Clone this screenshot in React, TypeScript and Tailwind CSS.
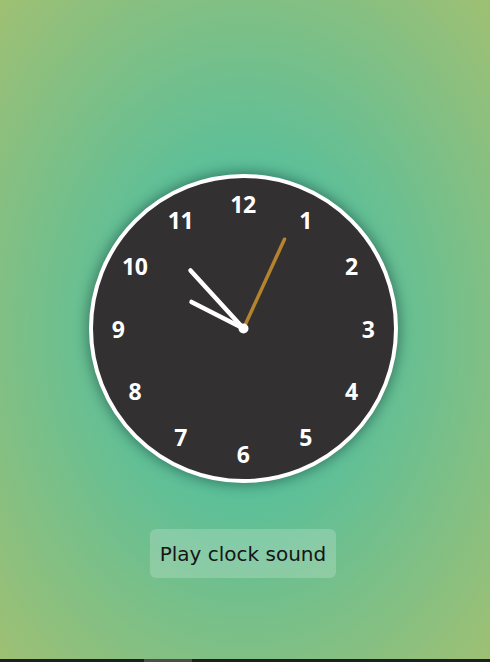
import React from "react";

const nums = [12, 1, 2, 3, 4, 5, 6, 7, 8, 9, 10, 11];

export default function App() {
  return (
    <div className="w-full min-h-[662px] flex flex-col bg-[radial-gradient(ellipse_farthest-corner_at_50%_50%,#4bbfa2_0%,#5cbf99_35%,#9fc073_100%)]">
      <div className="flex-1 flex flex-col items-center pt-[174px] pr-[4px] h-[659px]">
        <div className="relative w-[309px] h-[309px] rounded-full border-4 border-white bg-[#323031] shadow-[0_0_12px_3px_rgba(20,60,50,0.45)] shrink-0">
          {nums.map((n, i) => {
            const a = (i * 30 * Math.PI) / 180;
            const x = 150.5 + 125 * Math.sin(a);
            const y = 150.5 - 125 * Math.cos(a);
            return (
              <div
                key={n}
                className="absolute -translate-x-1/2 -translate-y-1/2 text-white text-[23px] font-bold leading-none tracking-[-0.5px] font-['Open_Sans','Noto_Sans',sans-serif]"
                style={{ left: x, top: y }}
              >
                {n}
              </div>
            );
          })}
          <svg className="absolute inset-0 w-full h-full" viewBox="-150.5 -150.5 301 301">
            <line x1="0" y1="0" x2="-52" y2="-26.6" stroke="#ffffff" strokeWidth="4.5" strokeLinecap="round" />
            <line x1="0" y1="0" x2="-53" y2="-58" stroke="#ffffff" strokeWidth="4.5" strokeLinecap="round" />
            <line x1="0" y1="0" x2="41" y2="-89.3" stroke="#b5832e" strokeWidth="3.5" strokeLinecap="round" />
            <circle cx="0" cy="0" r="5" fill="#ffffff" />
          </svg>
        </div>
        <button className="mt-[46px] w-[186px] h-[49px] rounded-md bg-[rgba(255,255,255,0.2)] text-[#151515] text-[20px] font-['DejaVu_Sans',sans-serif] flex items-center justify-center">
          Play clock sound
        </button>
      </div>
      <div className="h-[3px] bg-[#1d201f] relative">
        <div className="absolute left-[144px] top-0 h-[3px] w-[48px] bg-[#4d4d4d]" />
      </div>
    </div>
  );
}
